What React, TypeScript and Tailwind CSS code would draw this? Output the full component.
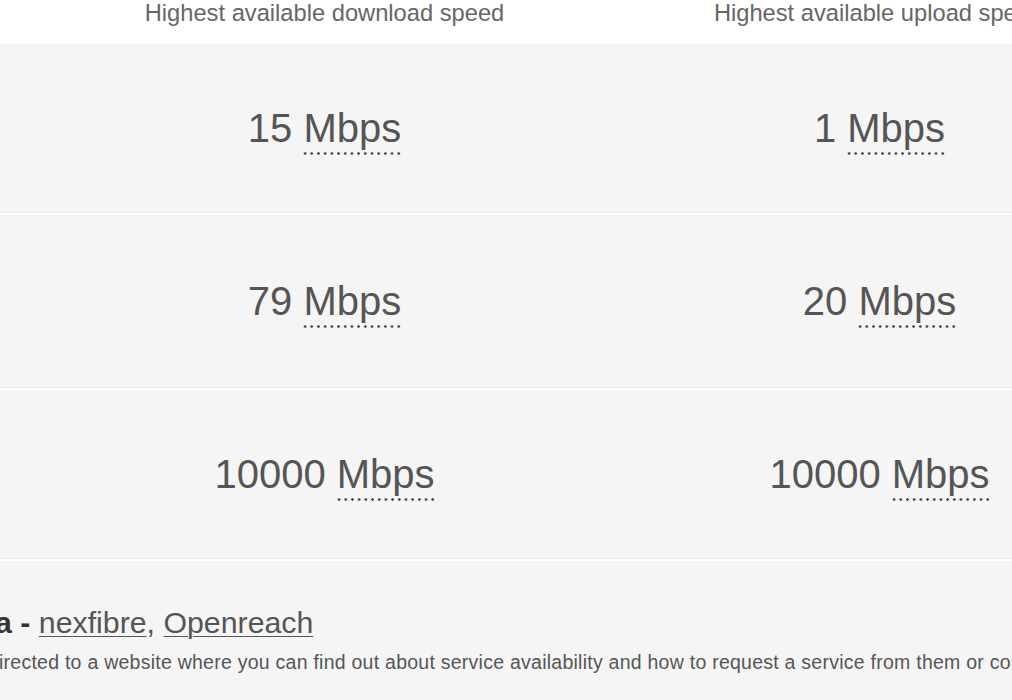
const rows = [
  { down: "15", up: "1" },
  { down: "79", up: "20" },
  { down: "10000", up: "10000" },
];

function Speed({ value }: { value: string }) {
  return (
    <span className="text-[40px] leading-[46px] text-[#555]">
      {value}{" "}
      <abbr
        title="Megabits per second"
        className="no-underline pb-[5px] bg-[radial-gradient(circle,#4a4a4a_1.1px,transparent_1.5px)] bg-[length:6.7px_3px] bg-repeat-x bg-bottom"
      >
        Mbps
      </abbr>
    </span>
  );
}

export default function App() {
  return (
    <div className="w-[1012px] h-[700px] overflow-hidden bg-[#f5f5f5] font-['Liberation_Sans',Arial,sans-serif]">
      {/* Table header */}
      <div className="grid grid-cols-[47px_555px_555px] h-[44px] bg-white text-[23.7px] leading-[27px] text-[#666]">
        <div />
        <div className="text-center whitespace-nowrap">Highest available download speed</div>
        <div className="text-center whitespace-nowrap -ml-[2px]">Highest available upload speed</div>
      </div>

      {/* Speed rows */}
      {rows.map((row, i) => (
        <div key={i} className="border-b-2 border-white">
          <div
            className={`grid grid-cols-[47px_555px_555px] border-b border-[#ebebeb] ${
              i === 1 ? "h-[173px]" : "h-[169px]"
            }`}
          >
            <div />
            <div className="flex items-center justify-center">
              <Speed value={row.down} />
            </div>
            <div className="flex items-center justify-center">
              <Speed value={row.up} />
            </div>
          </div>
        </div>
      ))}

      {/* Providers */}
      <div className="pt-[44px] whitespace-nowrap">
        <p className="text-[30.3px] leading-[35px] text-[#555] -ml-[5px]">
          <strong className="font-bold text-[#333]">a - </strong>
          <a href="#" className="underline underline-offset-[3px] decoration-1 text-[#555]">
            nexfibre
          </a>
          ,{" "}
          <a href="#" className="underline underline-offset-[3px] decoration-1 text-[#555]">
            Openreach
          </a>
        </p>
        <p className="mt-[11px] text-[19.5px] leading-[22px] tracking-[0.25px] text-[#555] -ml-[1px]">
          irected to a website where you can find out about service availability and how to request a service from them or contact them directly.
        </p>
      </div>
    </div>
  );
}
